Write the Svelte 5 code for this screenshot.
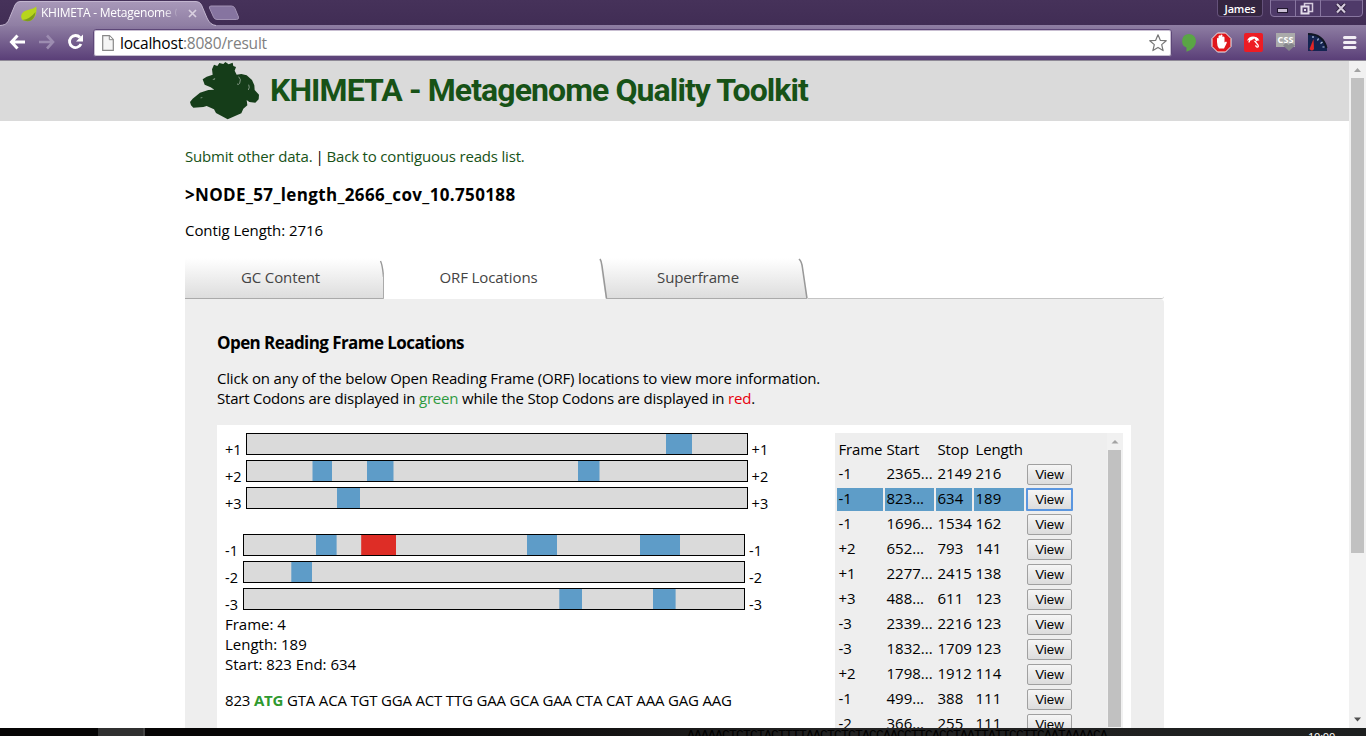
<script>
  const forward = [
    { label: '+1', blocks: [[419, 26]] },
    { label: '+2', blocks: [[65.5, 19.5], [120, 26.5], [331, 21.5]] },
    { label: '+3', blocks: [[90, 23]] }
  ];
  const reverse = [
    { label: '-1', blocks: [[72, 20.6], [117.2, 34.8, true], [283, 30], [396, 40]] },
    { label: '-2', blocks: [[47.3, 20.7]] },
    { label: '-3', blocks: [[315.3, 22.7], [409, 22.6]] }
  ];
  const rows = [
    ['-1', '2365...', '2149', '216'],
    ['-1', '823...', '634', '189'],
    ['-1', '1696...', '1534', '162'],
    ['+2', '652...', '793', '141'],
    ['+1', '2277...', '2415', '138'],
    ['+3', '488...', '611', '123'],
    ['-3', '2339...', '2216', '123'],
    ['-3', '1832...', '1709', '123'],
    ['+2', '1798...', '1912', '114'],
    ['-1', '499...', '388', '111'],
    ['-2', '366...', '255', '111']
  ];
  let selected = $state(1);
</script>

{#snippet frames(list)}
  <div class="frames">
    {#each list as f}
      <div class="frame">
        <span>{f.label}</span>
        <svg class="bar" width="502" height="22">
          <rect x=".5" y=".5" width="501" height="21" fill="#dadada" stroke="#000" />
          {#each f.blocks as [x, w, on]}
            <rect x={x + 1} y="1" width={w} height="20" fill={on ? '#de2d26' : '#5e9cc8'} />
          {/each}
        </svg>
        <span>{f.label}</span>
      </div>
    {/each}
  </div>
{/snippet}

<div class="screen">
  <header class="chrome">
    <div class="strip">
      <div class="tab">
        <svg class="tabshape" width="216" height="26" viewBox="0 0 216 26">
          <defs><linearGradient id="tg" x1="0" y1="0" x2="0" y2="1"><stop offset="0" stop-color="#a898b9" /><stop offset="1" stop-color="#8f7ea3" /></linearGradient></defs>
          <path d="M0 25.5C7 25 8 22 10 17L15 5Q16.500 1.500 20 1.500H196Q200 1.500 201.500 5L207 18Q210 25 216 25.500V26H0Z" fill="url(#tg)" />
          <path d="M0 25.500C7 25 8 22 10 17L15 5Q16.500 1.500 20 1.500H196Q200 1.500 201.500 5L207 18Q210 25 216 25.500" fill="none" stroke="#c2b5cf" stroke-width="1" />
        </svg>
        <svg class="leaf" width="16" height="16" viewBox="0 0 16 16"><path d="M15.300.500C12 4 4 3 1 7.500Q-1 11 1.500 14Q6 16 10 14.500Q16.500 11 15.300.500Z" fill="#b7d51c" /><path d="M1.500 14Q9 13 14.500 6Q14 12 10 14.500Q6 16 1.500 14Z" fill="#7d9c1d" /></svg>
        <span class="tabtitle">KHIMETA - Metagenome Q</span>
        <svg class="tabx" width="9" height="9" viewBox="0 0 9 9"><path d="M1 1L8 8M8 1L1 8" stroke="#d9d0e0" stroke-width="1.700" /></svg>
      </div>
      <svg class="newtab" width="32" height="16" viewBox="0 0 32 16"><path d="M3 1H23.500Q26 1 27 3.500L30.500 12Q31 14.500 28.500 14.500H9Q6.500 14.500 5.500 12L1.500 3Q1 1 3 1Z" fill="#8674a0" stroke="#a393b5" stroke-width="1" /></svg>
      <div class="user">James</div>
      <div class="winbtns">
        <svg width="94" height="18" viewBox="0 0 94 18">
          <path d="M.500 0V13Q.500 16.500 4 16.500H89Q92.500 16.500 92.500 13V0Z" fill="#4f3a69" stroke="#8876a0" />
          <path d="M25.500 0V16M50.500 0V16" stroke="#8876a0" />
          <rect x="7.500" y="8.500" width="10" height="4" fill="#c9bdd4" stroke="#22182f" />
          <rect x="34.500" y="3.500" width="8" height="8" fill="none" stroke="#d5cbdd" stroke-width="1.500" />
          <rect x="31.500" y="6.500" width="7" height="7" fill="#4f3a69" stroke="#e3dbe9" stroke-width="2" />
          <rect x="34" y="9" width="2" height="2" fill="#e3dbe9" />
          <path d="M67 4L75 12.500M75 4L67 12.500" stroke="#291c38" stroke-width="4" /><path d="M67 4L75 12.500M75 4L67 12.500" stroke="#d5cbdd" stroke-width="2.200" />
        </svg>
      </div>
    </div>
    <div class="toolbar">
      <svg class="nav" width="84" height="24" viewBox="0 0 84 24">
        <path d="M25 12H12M17.500 5.500L11.500 12L17.500 18.500" fill="none" stroke="#fff" stroke-width="3" />
        <path d="M39 12H52M47 5.500L53 12L47 18.500" fill="none" stroke="#9c8cb0" stroke-width="2.600" />
        <path d="M80 7.500A6 6 0 1 0 81 14" fill="none" stroke="#fff" stroke-width="2.800" /><path d="M83 4.500V11.500H76Z" fill="#fff" />
      </svg>
      <div class="omni">
        <svg width="12" height="16" viewBox="0 0 12 16"><path d="M.7.700H7.500L11.300 4.500V15.300H.7Z" fill="#f5f5f5" stroke="#888" stroke-width="1.200" /><path d="M7.300 1V4.700H11" fill="#fff" stroke="#888" /></svg>
        <span class="url">localhost<i>:8080/result</i></span>
        <svg class="star" width="20" height="20" viewBox="0 0 20 20"><path d="M10 1.800L12.300 7.300L18.200 7.700L13.700 11.600L15.100 17.600L10 14.400L4.900 17.600L6.300 11.600L1.800 7.700L7.700 7.300Z" fill="#fff" stroke="#777" stroke-width="1.200" stroke-linejoin="round" /></svg>
      </div>
      <svg class="exts" width="190" height="24" viewBox="0 0 190 24">
        <path d="M14 4A7 7 0 0 0 11.500 17.500V21.700Q21 18.500 21 11A7 7 0 0 0 14 4Z" fill="#5aa545" />
        <path d="M42.500 3H50.500L56 8.500V16.500L50.500 22H42.500L37 16.500V8.500Z" fill="#e0161b" stroke="#eee" stroke-width="1" />
        <path d="M42 12V8.500Q43 7 43.500 8.500V6Q44.700 4.700 45.500 6V5Q47 4 47.500 5.500V7Q49 6 49.500 7.500V12.500L51 11.500Q52.500 12 51.500 13.500L49 18.500H44Q42 16 42 12Z" fill="#fff" />
        <rect x="69" y="3" width="19" height="19" rx="2" fill="#ed1c24" />
        <path d="M72 11C73.500 5.500 81.500 5 84.500 10.500Q82.500 10 81 11.500Q78.500 9 76 10.500Q73.500 9.500 72 11Z" fill="#fff" /><path d="M74 12.500A5.500 4.500 0 0 1 83 9M79 10L83 15Q84 17.500 81.800 17Q80.500 16.500 81 15.200" fill="none" stroke="#fff" stroke-width="1.300" /><path d="M76 10.500L79.500 8.500L81 11Z" fill="#ed1c24" />
        <rect x="101" y="3" width="19" height="14" fill="#aaa" /><text x="102.500" y="13" font-size="9" font-weight="700" font-family="Open Sans, sans-serif" textLength="16" fill="#fff">CSS</text><path d="M108 15.500L111 13L113.500 15L116.500 13L120 15.500L114 21Z" fill="#85858b" />
        <path d="M133 21V3.500Q148 4 152 17V21Z" fill="#142451" /><path d="M133 4Q148 4 151.500 18" fill="none" stroke="#111724" stroke-width="2" /><path d="M134.500 19L138.500 9L139 19Q137 22 134.500 19Z" fill="#e32626" /><path d="M138 6V8M143.500 8.500L142.500 10.500M147.500 12L145.500 13.500M149.500 17H147.500" stroke="#b8c5e5" stroke-width="1.200" />
        <path d="M169.500 7.500H180M169.500 12.500H180M169.500 17.500H180" stroke="#f2eef5" stroke-width="3" stroke-linecap="round" />
      </svg>
    </div>
  </header>

  <div class="view">
    <main class="page">
      <div class="banner">
        <svg class="logo" width="70" height="58" viewBox="30 10 210 174">
          <path d="M30 130L38 120L60 102L85 94L103 93L92 86L74 78L68 62L80 54L98 48L96 32L102 18L112 22L118 13L130 16L136 10L146 17L158 12L160 22L168 25L164 36L170 48L184 46L200 50L216 64L223 80L224 94L237 108L236 122L226 132L208 130L200 124L202 140L190 150L184 164L143 182L108 163L102 152L80 142L70 145L40 147L33 140Z" fill="#153d19" />
          <path d="M97 62L106 59L103 63ZM60 118L69 115L64 119Z" fill="#b8c4b9" />
          <path d="M176 54Q185 62 179 74Q176 79 171 76M206 78Q210 86 205 94" fill="none" stroke="#b8c4b9" stroke-width="2" />
        </svg>
        <h1>KHIMETA - Metagenome Quality Toolkit</h1>
      </div>
      <div class="content">
        <p class="links"><a>Submit other data.</a><span class="sep">|</span><a>Back to contiguous reads list.</a></p>
        <h3 class="node">&gt;NODE_57_length_2666_cov_10.750188</h3>
        <p class="contig">Contig Length: 2716</p>
        <nav class="tabs">
          <div class="t gc">
            <svg width="199" height="41" viewBox="0 0 199 41"><defs><linearGradient id="g" x1="0" y1="0" x2="0" y2="1"><stop offset="0" stop-color="#fff" /><stop offset="1" stop-color="#dcdcdc" /></linearGradient></defs><path d="M0 0H193Q197 0 199 14V41H0Z" fill="url(#g)" /><path d="M195.500 3Q197.500 7 198.500 19" fill="none" stroke="#999" stroke-width="1.400" /><path d="M198.500 16V40.500H0" fill="none" stroke="#aaa" /></svg>
            <span>GC Content</span>
          </div>
          <div class="t orf"><span>ORF Locations</span></div>
          <div class="t sf">
            <svg width="209" height="41" viewBox="0 0 209 41"><path d="M0 0H193Q200 0 201.500 5L208 41H7Z" fill="url(#g)" /><path d="M1 1Q2.500 3 3 8L7.500 40.500" fill="none" stroke="#999" stroke-width="1.600" /><path d="M200 1Q203 4 203.500 10L208 40.500" fill="none" stroke="#999" stroke-width="1.600" /><path d="M7 40.500H208" stroke="#aaa" /></svg>
            <span>Superframe</span>
          </div>
          <div class="rest"></div>
        </nav>
        <section class="panel">
          <h3>Open Reading Frame Locations</h3>
          <p class="intro">Click on any of the below Open Reading Frame (ORF) locations to view more information.<br /><span class="l2">Start Codons are displayed in <em class="green">green</em> while the Stop Codons are displayed in <em class="red">red</em>.</span></p>
          <div class="white">
            <div class="left">
              {@render frames(forward)}
              {@render frames(reverse)}
              <div class="info">Frame: 4<br />Length: 189<br />Start: 823 End: 634</div>
              <div class="seq">823 <b>ATG</b> GTA ACA TGT GGA ACT TTG GAA GCA GAA CTA CAT AAA GAG AAG</div>
            </div>
            <div class="list">
              <div class="grid">
                <div class="row head"><span>Frame</span><span>Start</span><span>Stop</span><span>Length</span></div>
                {#each rows as r, i}
                  <div class="row" class:sel={selected === i}>
                    {#each r as c}<span>{c}</span>{/each}
                    <button onclick={() => (selected = i)}>View</button>
                  </div>
                {/each}
              </div>
              <div class="lscroll"><svg width="16" height="16"><path d="M4.500 10.500L8 7L11.500 10.500Z" fill="#a3a3a3" /></svg><div class="lthumb"></div></div>
            </div>
          </div>
        </section>
      </div>
    </main>
    <div class="scroll">
      <svg width="17" height="17"><path d="M5 11L8.500 7L12 11Z" fill="#a3a3a3" /></svg>
      <div class="thumb"></div>
      <svg class="down" width="17" height="17"><path d="M5 6.500L8.500 10.500L12 6.500Z" fill="#505050" /></svg>
    </div>
  </div>
  <footer class="taskbar"><span class="p1"></span><span class="p2"></span><span class="p3"><i>AAAAACTCTCTACTTTTAACTCTCTACCAACCTTCACCTAATTATTCCTTCAATAAAACA</i></span><span class="clock">10:00</span></footer>
</div>

<style>
  :global(body) { overflow: hidden; }
  * { box-sizing: border-box; }
  .screen { width: 1366px; height: 736px; overflow: hidden; display: flex; flex-direction: column; background: #fff; color: #000; font: 15px/20px 'Open Sans', 'Noto Sans', sans-serif; }
  .chrome { height: 61px; flex: none; }
  .strip { height: 25px; background: linear-gradient(#46325a, #412d55); display: flex; }
  .tab { width: 208px; height: 26px; position: relative; display: flex; align-items: center; padding-left: 21px; color: #fff; font-size: 12px; flex: none; z-index: 1; }
  .tabshape { position: absolute; left: 0; top: 0; }
  .leaf { position: relative; flex: none; margin-top: 2px; }
  .tabtitle { position: relative; width: 136px; margin-left: 4px; overflow: hidden; white-space: nowrap; letter-spacing: -.25px; mask-image: linear-gradient(90deg, #000 122px, transparent 138px); }
  .tabx { position: relative; margin-left: 11px; margin-top: 1px; }
  .newtab { margin: 5px 0 0 0; }
  .user { margin-left: 977px; width: 46px; height: 17px; border: 1px solid #65527b; border-top: 0; border-radius: 0 0 4px 4px; background: #33243f; color: #fff; font-size: 11px; font-weight: 600; line-height: 17px; text-align: center; letter-spacing: -.2px; flex: none; }
  .winbtns { margin-left: 7px; height: 18px; }
  .toolbar { height: 36px; border-bottom: 1px solid #8f8a97; background: linear-gradient(#8f7ea3, #5a3f78); display: flex; align-items: center; }
  .nav { flex: none; margin-top: -1px; }
  .omni { margin-left: 9px; width: 1079px; height: 28px; margin-top: 0; border: 1px solid #5d4778; box-shadow: inset 0 0 0 1px #c9bfd2; border-radius: 3px; background: #fff; display: flex; align-items: center; padding: 0 3px 0 8px; }
  .url { margin-left: 6px; font-size: 15.500px; letter-spacing: -.22px; }
  .url i { font-style: normal; color: #808080; }
  .star { margin-left: auto; }
  .exts { margin-left: 3px; margin-top: -2px; }
  .view { height: 667px; display: flex; }
  .page { width: 1349px; height: 667px; overflow: hidden; }
  .banner { height: 60px; background: #dadada; padding-left: 190px; display: flex; align-items: center; }
  h1 { margin: 0 0 2px 10px; font-family: Roboto, 'Open Sans', sans-serif; font-size: 32px; line-height: 40px; font-weight: 700; letter-spacing: -.91px; color: #175217; white-space: nowrap; }
  .content { width: 979px; margin-left: 185px; }
  p, h3 { margin: 0; white-space: nowrap; }
  h3 { font-size: 17px; line-height: 24px; font-weight: 700; letter-spacing: -.57px; }
  .links { padding-top: 25px; letter-spacing: -.18px; }
  .links a { color: #175217; }
  .sep { margin: 0 3px; }
  .node { margin-top: 17px; letter-spacing: .35px; }
  .contig { margin-top: 13px; letter-spacing: -.06px; }
  .tabs { display: flex; height: 41px; margin-top: 18px; color: #444; letter-spacing: -.1px; }
  .t { position: relative; display: flex; justify-content: center; line-height: 38px; }
  .t span { position: relative; }
  .t svg { position: absolute; left: 0; top: 0; }
  .gc { width: 199px; padding-right: 8px; }
  .orf { width: 215px; padding-right: 6px; }
  .sf { width: 209px; padding-right: 11px; }
  .rest { flex: 1; border-bottom: 1px solid #c4c4c4; border-radius: 0 0 3px 0; }
  .panel { background: #eee; height: 460px; padding: 32px 33px 0 32px; border-radius: 0 4px 0 0; }
  .intro { margin-top: 13px; letter-spacing: -.18px; }
  .l2 { letter-spacing: -.21px; }
  em { font-style: normal; }
  .green { color: #2f9a3f; }
  .red { color: #e8000c; }
  .white { margin-top: 17px; background: #fff; height: 340px; padding: 8px 8px 0 8px; display: flex; justify-content: space-between; }
  .frames { display: flex; flex-direction: column; gap: 5px; margin-bottom: 25px; }
  .frames + .frames { margin-bottom: 4px; }
  .frames + .frames .frame span:first-child { width: 14px; }
  .frame { display: flex; align-items: flex-end; height: 22px; gap: 4px; font-size: 14.500px; }
  .frame span { line-height: 20px; position: relative; top: 5px; }
  .bar { display: block; flex: none; }
  .seq { margin-top: 16px; letter-spacing: -.18px; white-space: nowrap; }
  .seq b { color: #2f9a2f; }
  .list { width: 288px; background: #eee; display: flex; }
  .grid { width: 272px; height: 330px; padding: 5px 0 0 2px; display: flex; flex-direction: column; gap: 2px; }
  .row { display: grid; grid-template-columns: 46px 49px 36px 50px 47px; column-gap: 2px; height: 23px; flex: none; }
  .row span { padding-left: 1.500px; line-height: 20px; white-space: nowrap; }
  .row.head span { line-height: 22px; letter-spacing: -.15px; }
  .row.sel span { background: #5e9dc8; }
  button { margin: 1px; padding: 0; border: 1px solid #a0a0a0; border-radius: 2px; background: linear-gradient(#f6f6f6, #dcdcdc); font: 13.333px 'Liberation Sans', Arial, sans-serif; color: #000; }
  .sel button { margin: 0; border: 2px solid #5b96df; border-radius: 1px; }
  .lscroll { width: 16px; background: #f1f1f1; }
  .lscroll svg { display: block; }
  .lthumb { width: 13px; height: 277px; margin: 1px 0 0 1px; background: #c1c1c1; }
  .scroll { width: 17px; background: #f1f1f1; display: flex; flex-direction: column; }
  .thumb { width: 13px; height: 475px; margin-left: 2px; background: #c1c1c1; }
  .down { margin-top: auto; }
  .taskbar { height: 8px; overflow: hidden; background: linear-gradient(90deg, #060505 0 30%, #161515 47%, #222 60%, #1d1f1f 100%); display: flex; }
  .p1 { width: 98px; }
  .p2 { width: 47px; background: #303030; border-right: 2px solid #444; }
  .p3 { width: 1163px; padding-left: 542px; color: #000; font: 13px/15px 'Liberation Mono', monospace; letter-spacing: -.8px; white-space: nowrap; }
  .p3 i { font-style: normal; }
  .clock { color: #fff; font-size: 11px; line-height: 17px; letter-spacing: -.2px; }
</style>
